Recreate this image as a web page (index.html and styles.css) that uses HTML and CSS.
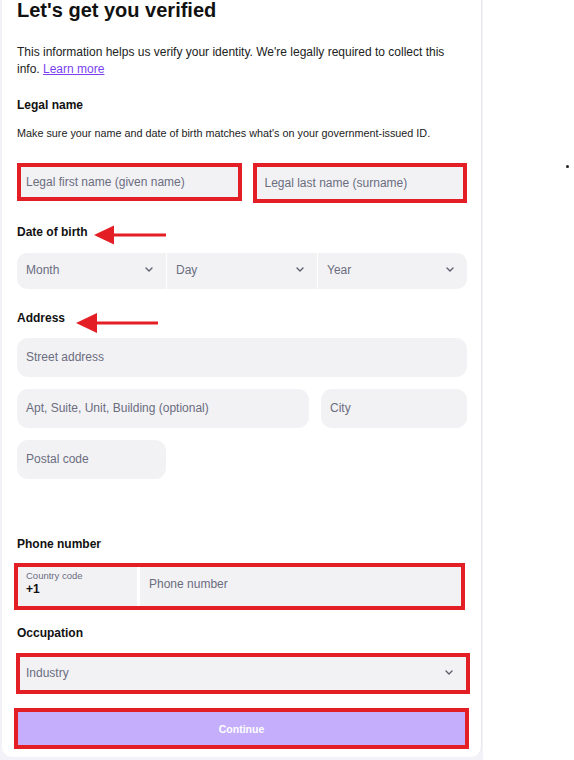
FILE: index.html
```html
<!DOCTYPE html>
<html lang="en">
<head>
<meta charset="utf-8">
<title>Let's get you verified</title>
<link rel="stylesheet" href="styles.css">
</head>
<body>
<div class="page">
  <div class="frame">
    <main class="card">
      <h1 class="title">Let's get you verified</h1>
      <p class="intro">This information helps us verify your identity. We're legally required to collect this info. <a href="#" class="link">Learn more</a></p>

      <h2 class="label label-legal">Legal name</h2>
      <p class="hint">Make sure your name and date of birth matches what's on your government-issued ID.</p>
      <div class="names">
        <div class="field marked first-name"><span>Legal first name (given name)</span></div>
        <div class="field marked last-name"><span>Legal last name (surname)</span></div>
      </div>

      <h2 class="label label-arrow label-dob"><span>Date of birth</span>
        <svg class="arrow arrow-dob" width="72" height="20" viewBox="0 0 72 20"><polygon points="0,10 20,0.5 20,19.5" fill="#e31e24"/><rect x="18" y="8.5" width="54" height="3" fill="#e31e24"/></svg>
      </h2>
      <div class="dob">
        <div class="field select month"><span>Month</span><svg class="chev" width="8" height="5" viewBox="0 0 8 5"><path d="M1 1 L4 4 L7 1" fill="none" stroke="#5d5f6e" stroke-width="1.4" stroke-linecap="round" stroke-linejoin="round"/></svg></div>
        <div class="field select day"><span>Day</span><svg class="chev" width="8" height="5" viewBox="0 0 8 5"><path d="M1 1 L4 4 L7 1" fill="none" stroke="#5d5f6e" stroke-width="1.4" stroke-linecap="round" stroke-linejoin="round"/></svg></div>
        <div class="field select year"><span>Year</span><svg class="chev" width="8" height="5" viewBox="0 0 8 5"><path d="M1 1 L4 4 L7 1" fill="none" stroke="#5d5f6e" stroke-width="1.4" stroke-linecap="round" stroke-linejoin="round"/></svg></div>
      </div>

      <h2 class="label label-arrow label-address"><span>Address</span>
        <svg class="arrow arrow-address" width="82" height="20" viewBox="0 0 82 20"><polygon points="0,10 21,0 21,20" fill="#e31e24"/><rect x="19" y="8.5" width="63" height="3" fill="#e31e24"/></svg>
      </h2>
      <div class="field input street"><span>Street address</span></div>
      <div class="row2">
        <div class="field input apt"><span>Apt, Suite, Unit, Building (optional)</span></div>
        <div class="field input city"><span>City</span></div>
      </div>
      <div class="field input postal"><span>Postal code</span></div>

      <h2 class="label label-phone">Phone number</h2>
      <div class="phone">
        <div class="cc">
          <div class="cc-label">Country code</div>
          <div class="cc-value">+1</div>
        </div>
        <div class="field phone-input"><span>Phone number</span></div>
      </div>

      <h2 class="label label-occ">Occupation</h2>
      <div class="field marked industry"><span>Industry</span><svg class="chev" width="8" height="5" viewBox="0 0 8 5"><path d="M1 1 L4 4 L7 1" fill="none" stroke="#5d5f6e" stroke-width="1.4" stroke-linecap="round" stroke-linejoin="round"/></svg></div>

      <button class="continue" type="button">Continue</button>
    </main>
  </div>
  <aside class="side"><span class="dot"></span></aside>
</div>
</body>
</html>
```
FILE: styles.css
```css
* { box-sizing: border-box; }
html, body { margin: 0; padding: 0; }
body {
  font-family: "Liberation Sans", Arial, sans-serif;
  color: #222222;
  background: #ffffff;
}
.page { display: flex; min-height: 760px; }
.frame {
  flex-shrink: 0;
  width: 483px;
  min-height: 760px;
  padding-left: 2px;
  background: #f3f2f8;
}
.card {
  width: 480px;
  background: #ffffff;
  border-right: 1px solid #e7e7ed;
  border-radius: 0 0 10px 10px;
  padding: 0 14px 8px 15px;
}
.title {
  margin: -2px 0 0;
  font-size: 20px;
  line-height: 24px;
  font-weight: 700;
  color: #111111;
}
.intro {
  margin: 22px 0 0;
  font-size: 12px;
  line-height: 17px;
  color: #222222;
}
.link { color: #7a3ff0; text-decoration: underline; }
.label {
  margin: 0;
  font-size: 12px;
  line-height: 16px;
  font-weight: 700;
  color: #111111;
}
.label-legal { margin-top: 19px; }
.hint {
  margin: 12px 0 0;
  font-size: 10.8px;
  line-height: 16px;
  color: #222222;
}
.names {
  display: flex;
  align-items: flex-start;
  gap: 11px;
  margin-top: 22px;
}
.field {
  display: flex;
  align-items: center;
  background: #f2f2f5;
  border-radius: 11px;
  font-size: 12px;
  line-height: 16px;
  color: #6b6d7e;
  white-space: nowrap;
}
.marked {
  border: 4px solid #e31e24;
  border-radius: 0;
}
.first-name { width: 226px; height: 38px; padding-left: 5px; }
.last-name { width: 214px; height: 40px; padding-left: 7px; }

.label-arrow { display: flex; align-items: center; height: 16px; }
.label-dob { margin-top: 21px; gap: 6px; }
.arrow-dob { margin-top: 5px; }
.label-address { margin-top: 21px; gap: 11px; }
.arrow-address { margin-top: 10px; }

.dob { display: flex; gap: 1px; margin-top: 13px; }
.select {
  height: 36px;
  justify-content: space-between;
  padding: 0 13px 3px 9px;
}
.chev { flex-shrink: 0; }
.month { width: 149px; border-radius: 10px 0 0 10px; }
.day { width: 150px; border-radius: 0; }
.year { width: 149px; border-radius: 0 10px 10px 0; }

.input { height: 39px; padding: 0 9px 1px; }
.street { margin-top: 12px; }
.row2 { display: flex; gap: 12px; margin-top: 12px; }
.apt { width: 292px; }
.city { flex: 1; }
.postal { width: 149px; margin-top: 12px; }

.label-phone { margin-top: 57px; }
.phone {
  display: flex;
  gap: 3px;
  width: 451px;
  height: 47px;
  margin: 11px 0 0 -3px;
  border: 4px solid #e31e24;
  background: #ffffff;
}
.cc {
  width: 119px;
  background: #f2f2f5;
  padding: 3px 0 0 8px;
}
.cc-label { font-size: 9.5px; line-height: 12px; color: #6b6d7e; }
.cc-value { font-size: 12px; line-height: 14px; font-weight: 700; color: #111111; }
.phone-input {
  flex: 1;
  border-radius: 0;
  padding: 0 9px 6px;
}

.label-occ { margin-top: 14.5px; }
.industry {
  width: 454px;
  height: 41px;
  margin: 12.5px 0 0 -1px;
  justify-content: space-between;
  padding: 0 13px 2px 6px;
}

.continue {
  display: flex;
  align-items: center;
  justify-content: center;
  width: 455px;
  height: 41px;
  margin: 14.3px 0 0 -3px;
  padding: 0;
  border: 4px solid #e31e24;
  background: #c5aefb;
  color: #ffffff;
  font-family: "Liberation Sans", Arial, sans-serif;
  font-size: 10.5px;
  line-height: 14px;
  font-weight: 700;
}

.side { flex: 1; padding: 165px 0 0 83px; }
.dot {
  display: block;
  width: 3px;
  height: 3px;
  border-radius: 50%;
  background: #222222;
}
```
